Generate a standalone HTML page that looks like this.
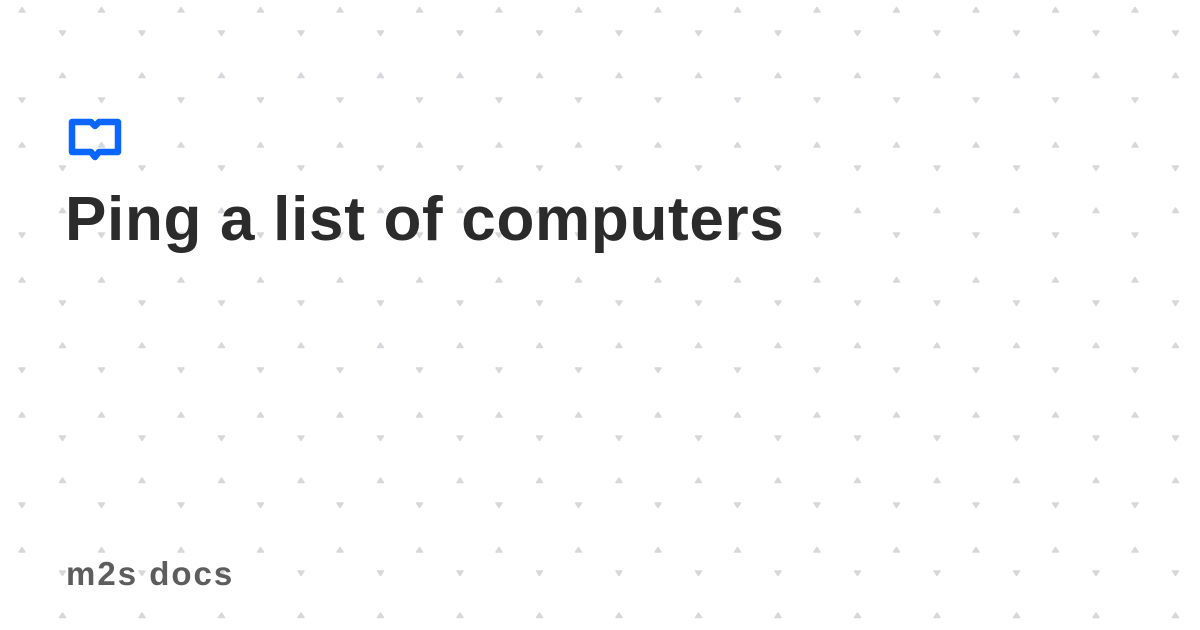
<!DOCTYPE html>
<html><head><style>
html,body{margin:0;padding:0;width:1200px;height:630px;overflow:hidden;background:#fff;}
svg.bg{position:absolute;left:0;top:0}
.t{position:absolute;left:65px;top:184px;font:bold 62px "Liberation Sans",sans-serif;color:#2b2b2b;white-space:nowrap;letter-spacing:0.7px}
.f{position:absolute;left:66px;top:555px;font:bold 33px "Liberation Sans",sans-serif;color:#5d5d5d;white-space:nowrap;letter-spacing:2px}
</style></head><body>
<svg class="bg" width="1200" height="630">
<defs>
<pattern id="p" x="2" y="0" width="79.5" height="135" patternUnits="userSpaceOnUse">
<g fill="#d6d8db" stroke="#d6d8db" stroke-width="1.5" stroke-linejoin="round">
<path d="M20 7.5 L23 12 L17 12Z"/>
<path d="M57.5 31 L63.5 31 L60.5 35.5Z"/>
<path d="M60.5 73 L63.5 77.5 L57.5 77.5Z"/>
<path d="M17 98 L23 98 L20 102.5Z"/>
</g>
</pattern>
</defs>
<rect width="1200" height="630" fill="url(#p)"/>
<path d="M72 122 H91 L95 126 L99 122 H118 V152 H99 L95 157 L91 152 H72 Z" fill="none" stroke="#0a66ff" stroke-width="6.5" stroke-linejoin="round"/>
</svg>
<div class="t">Ping a list of computers</div>
<div class="f">m2s docs</div>
</body></html>
